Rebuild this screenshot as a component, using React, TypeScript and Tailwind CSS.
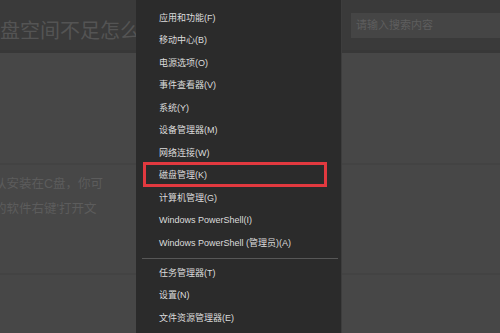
import React from "react";

const items: (string | null)[] = [
  "应用和功能(F)",
  "移动中心(B)",
  "电源选项(O)",
  "事件查看器(V)",
  "系统(Y)",
  "设备管理器(M)",
  "网络连接(W)",
  "磁盘管理(K)",
  "计算机管理(G)",
  "Windows PowerShell(I)",
  "Windows PowerShell (管理员)(A)",
  null,
  "任务管理器(T)",
  "设置(N)",
  "文件资源管理器(E)",
];

export default function App() {
  return (
    <div
      className="relative w-[500px] h-[333px] overflow-hidden bg-[#474747] flex flex-col"
      style={{ fontFamily: '"Liberation Sans","Noto Sans CJK SC",sans-serif' }}
    >
      {/* header */}
      <div className="h-[53px] shrink-0 bg-[#3a3a3a] border-b-[3px] border-[#383838] flex items-start">
        <div className="w-[351px] shrink-0 pt-[19px] pl-0 text-[20px] leading-[24px] text-[#545454] whitespace-nowrap overflow-hidden">
          盘空间不足怎么
        </div>
        <div className="mt-[13px] flex-1 h-[25px] bg-[#454545] flex items-center pl-[5px] text-[11px] text-[#5e5e5e] whitespace-nowrap">
          请输入搜索内容
        </div>
      </div>
      {/* body */}
      <div className="flex-1 flex flex-col">
        <div className="h-[112px] shrink-0 border-b-2 border-[#434343]" />
        <div className="h-[110px] shrink-0 border-b-2 border-[#434343] pt-[7px] text-[12.5px] leading-[25px] text-[#5c5c5c] whitespace-nowrap">
          <div className="-ml-[6px]">从安装在C盘，你可</div>
          <div className="-ml-[6px]">的软件右键'打开文</div>
        </div>
        <div className="flex-1" />
      </div>

      {/* context menu */}
      <div className="absolute left-[136px] top-0 w-[206px] h-[333px] bg-[#2b2b2b] border-r border-[#3d3d3d] pt-[7px] flex flex-col">
        {items.map((it, i) =>
          it === null ? (
            <div key={i} className="h-[7.5px] flex items-center pl-[6px] pr-[3px]">
              <div className="h-px w-full bg-[#575757]" />
            </div>
          ) : (
            <div
              key={i}
              className="h-[22.5px] shrink-0 flex items-center pl-[23px] text-[9px] text-[#dcdcdc] whitespace-nowrap"
            >
              {it}
            </div>
          )
        )}
      </div>

      {/* red highlight */}
      <div className="absolute left-[143px] top-[162px] w-[184px] h-[25px] border-[3px] border-[#e2393f]" />
    </div>
  );
}
